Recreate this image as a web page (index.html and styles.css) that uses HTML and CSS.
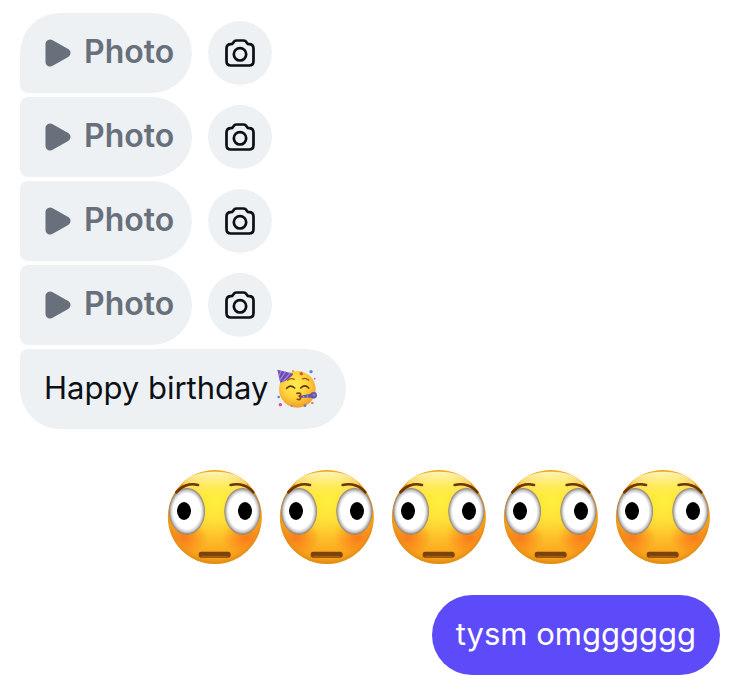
FILE: index.html
```html
<!DOCTYPE html>
<html lang="en">
<head>
<meta charset="utf-8">
<meta name="viewport" content="width=device-width, initial-scale=1">
<title>Chat</title>
<link rel="stylesheet" href="styles.css">
</head>
<body>
<svg class="sprite" aria-hidden="true">
  <defs>
    <radialGradient id="skin" gradientUnits="userSpaceOnUse" cx="166" cy="120" r="195">
      <stop offset="0" stop-color="#fff03c"/>
      <stop offset="0.3" stop-color="#fde238"/>
      <stop offset="0.6" stop-color="#fdbd28"/>
      <stop offset="0.9" stop-color="#f99f1c"/>
      <stop offset="1" stop-color="#dd8413"/>
    </radialGradient>
    <radialGradient id="rim" gradientUnits="userSpaceOnUse" cx="165.500" cy="170" r="141">
      <stop offset="0.84" stop-color="#f0a020" stop-opacity="0"/>
      <stop offset="1" stop-color="#e08c14" stop-opacity="0.65"/>
    </radialGradient>
    <linearGradient id="shine" x1="0" y1="0" x2="0" y2="1">
      <stop offset="0" stop-color="#fff8c8" stop-opacity="0.95"/>
      <stop offset="1" stop-color="#fff04a" stop-opacity="0"/>
    </linearGradient>
    <radialGradient id="blush">
      <stop offset="0" stop-color="#fb6a18" stop-opacity="0.75"/>
      <stop offset="1" stop-color="#fb6a18" stop-opacity="0"/>
    </radialGradient>
    <radialGradient id="eye">
      <stop offset="0.76" stop-color="#fff"/>
      <stop offset="0.88" stop-color="#d2d0d0"/>
      <stop offset="1" stop-color="#857b70"/>
    </radialGradient>
    <radialGradient id="party-skin" cx="0.45" cy="0.38" r="0.65">
      <stop offset="0" stop-color="#ffed52"/>
      <stop offset="0.55" stop-color="#fed23a"/>
      <stop offset="1" stop-color="#f0982a"/>
    </radialGradient>
    <clipPath id="face-clip"><circle cx="165.500" cy="170" r="141"/></clipPath>
  </defs>
  <symbol id="play" viewBox="0 0 26 28">
    <path d="M5 5V23L21 14Z" fill="currentColor" stroke="currentColor" stroke-width="9" stroke-linejoin="round"/>
  </symbol>
  <symbol id="camera" viewBox="0 0 30 28">
    <path d="M11.500 1.500H18.500C20 1.500 20.800 2 21.500 3.200L22.200 4.300C22.600 5 23.100 5.200 24 5.200C27 5.200 28.500 6.700 28.500 9.700V22C28.500 25 27 26.500 24 26.500H6C3 26.500 1.500 25 1.500 22V9.700C1.500 6.700 3 5.200 6 5.200C6.900 5.200 7.400 5 7.800 4.300L8.500 3.200C9.200 2 10 1.500 11.500 1.500Z" fill="none" stroke="currentColor" stroke-width="2.700" stroke-linejoin="round"/>
    <circle cx="15" cy="15.300" r="6.200" fill="none" stroke="currentColor" stroke-width="2.700"/>
  </symbol>
  <symbol id="flushed" viewBox="22 26 288 288">
    <circle cx="165.500" cy="170" r="141" fill="url(#skin)"/>
    <g clip-path="url(#face-clip)">
      <ellipse cx="72" cy="232" rx="72" ry="52" fill="url(#blush)"/>
      <ellipse cx="259" cy="232" rx="72" ry="52" fill="url(#blush)"/>
      <circle cx="165.500" cy="170" r="141" fill="url(#rim)"/>
      <ellipse cx="165.500" cy="76" rx="96" ry="42" fill="url(#shine)"/>
    </g>
    <ellipse cx="82" cy="153" rx="54" ry="70" fill="url(#eye)"/>
    <ellipse cx="248" cy="153" rx="54" ry="70" fill="url(#eye)"/>
    <ellipse cx="73" cy="152" rx="21" ry="27" fill="#000"/>
    <ellipse cx="256" cy="152" rx="21" ry="27" fill="#000"/>
    <path d="M50 96C64 77 90 67 115 74M281 96C267 77 241 67 213 74" fill="none" stroke="#6b3608" stroke-width="8" stroke-linecap="round"/>
    <rect x="117" y="274" width="96" height="18" rx="8" fill="#7c4309"/>
    <path d="M124 288H206" stroke="#a86512" stroke-width="3"/>
  </symbol>
  <symbol id="party" viewBox="18 22 126 120">
    <circle cx="82" cy="86" r="55" fill="url(#party-skin)"/>
    <path d="M22 27L70 39C64 50 45 63 31 66Z" fill="#6d4ab4"/>
    <path d="M33 30L27 46M47 33L29 59M61 37L38 64" stroke="#a080dc" stroke-width="4" fill="none"/>
    <path d="M53 59Q62 51 73 56M97 55Q107 50 116 59" stroke="#9b5b14" stroke-width="4" fill="none" stroke-linecap="round"/>
    <path d="M50 83Q61 70 74 82M92 82Q105 69 116 82" stroke="#69360c" stroke-width="5" fill="none" stroke-linecap="round"/>
    <path d="M81 98Q93 96 92 102Q91 106 86 106Q94 109 91 114Q88 118 82 116" stroke="#8b3e12" stroke-width="5" fill="none" stroke-linecap="round"/>
    <path d="M91 105L130 98V111L91 111Z" fill="#6556a8"/>
    <circle cx="131" cy="104" r="10" fill="#6658b0"/>
    <circle cx="132" cy="103" r="4" fill="#927bc7"/>
    <path d="M101 106V111M112 104V111" stroke="#b59bd6" stroke-width="3"/>
    <circle cx="123" cy="33" r="5" fill="#508bd2"/>
    <circle cx="94" cy="39" r="5" fill="#e4483e"/>
    <circle cx="69" cy="31" r="3" fill="#ec8b48"/>
    <circle cx="134" cy="54" r="3" fill="#db70bc"/>
    <circle cx="26" cy="109" r="4" fill="#6289bd"/>
    <circle cx="31" cy="132" r="5" fill="#cc4e94"/>
    <circle cx="65" cy="136" r="3" fill="#5a99cb"/>
    <circle cx="105" cy="135" r="4" fill="#687aad"/>
    <circle cx="127" cy="127" r="4" fill="#ec8461"/>
  </symbol>
</svg>
<main class="chat">
  <section class="received">
    <div class="row">
      <button class="bubble photo first" type="button"><svg class="play" aria-hidden="true"><use href="#play"/></svg><span>Photo</span></button>
      <button class="camera-button" type="button" aria-label="Reply with a photo"><svg class="camera"><use href="#camera"/></svg></button>
    </div>
    <div class="row">
      <button class="bubble photo" type="button"><svg class="play" aria-hidden="true"><use href="#play"/></svg><span>Photo</span></button>
      <button class="camera-button" type="button" aria-label="Reply with a photo"><svg class="camera"><use href="#camera"/></svg></button>
    </div>
    <div class="row">
      <button class="bubble photo" type="button"><svg class="play" aria-hidden="true"><use href="#play"/></svg><span>Photo</span></button>
      <button class="camera-button" type="button" aria-label="Reply with a photo"><svg class="camera"><use href="#camera"/></svg></button>
    </div>
    <div class="row">
      <button class="bubble photo" type="button"><svg class="play" aria-hidden="true"><use href="#play"/></svg><span>Photo</span></button>
      <button class="camera-button" type="button" aria-label="Reply with a photo"><svg class="camera"><use href="#camera"/></svg></button>
    </div>
    <p class="bubble text last"><span>Happy birthday</span><svg class="party" role="img" aria-label="Partying face"><use href="#party"/></svg></p>
  </section>
  <section class="sent">
    <div class="reactions" role="img" aria-label="Five flushed faces">
      <svg class="flushed"><use href="#flushed"/></svg>
      <svg class="flushed"><use href="#flushed"/></svg>
      <svg class="flushed"><use href="#flushed"/></svg>
      <svg class="flushed"><use href="#flushed"/></svg>
      <svg class="flushed"><use href="#flushed"/></svg>
    </div>
    <p class="bubble own">tysm omgggggg</p>
  </section>
</main>
</body>
</html>
```

FILE: styles.css
```css
* {
  box-sizing: border-box;
}

body {
  margin: 0;
  background: #fff;
  color: #0b1014;
  font-family: Inter, "Liberation Sans", sans-serif;
  font-size: 31px;
  line-height: 40px;
}

svg {
  display: block;
  flex: none;
}

.sprite {
  position: absolute;
  width: 0;
  height: 0;
}

.chat {
  padding: 13px 15px 16px 20px;
}

.received {
  display: flex;
  flex-direction: column;
  align-items: flex-start;
  gap: 4px;
}

.row {
  display: flex;
  align-items: center;
  gap: 16px;
}

.bubble {
  display: flex;
  align-items: center;
  min-height: 80px;
  margin: 0;
  padding: 18px 24px 20px;
  border: 0;
  border-radius: 8px 40px 40px 8px;
  background: #eef1f4;
  color: inherit;
  font: inherit;
}

.photo {
  gap: 13px;
  padding: 18px 18px 20px 25px;
  color: #68707c;
  font-size: 32px;
  font-weight: 600;
}

.first {
  border-top-left-radius: 40px;
}

.last {
  border-bottom-left-radius: 40px;
}

.text {
  gap: 8px;
  padding-right: 28px;
}

.play {
  width: 26px;
  height: 28px;
  margin-top: 2px;
}

.camera-button {
  display: grid;
  place-items: center;
  width: 64px;
  height: 64px;
  padding: 0;
  border: 0;
  border-radius: 50%;
  background: #eef1f4;
  color: #0b1014;
}

.camera {
  width: 30px;
  height: 28px;
}

.party {
  width: 42px;
  height: 40px;
}

.sent {
  display: flex;
  flex-direction: column;
  align-items: flex-end;
  gap: 30px;
  margin-top: 40px;
}

.reactions {
  display: flex;
  gap: 16px;
  padding-right: 9px;
}

.flushed {
  width: 96px;
  height: 96px;
}

.own {
  border-radius: 40px;
  background: #5d4bfa;
  color: #fff;
}
```
